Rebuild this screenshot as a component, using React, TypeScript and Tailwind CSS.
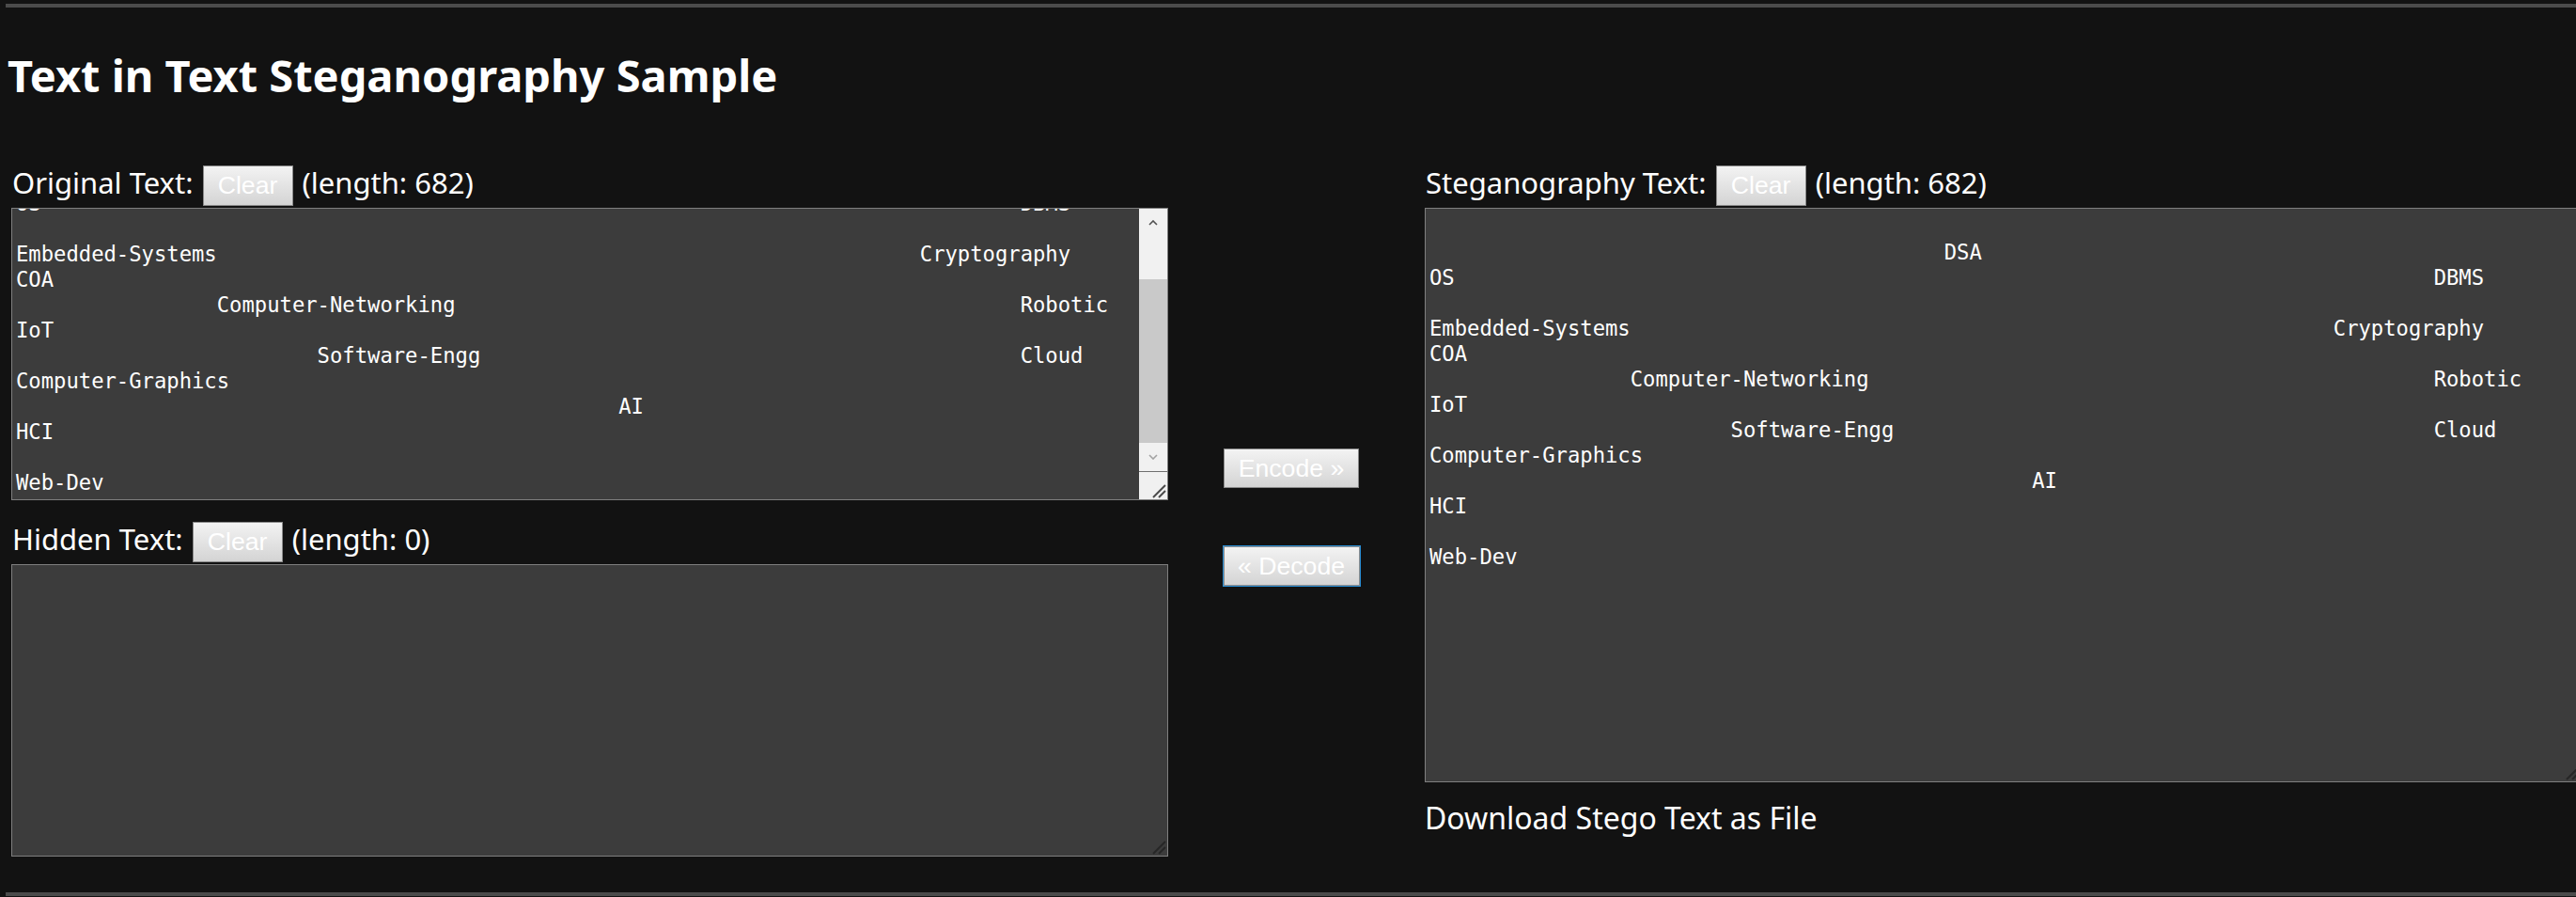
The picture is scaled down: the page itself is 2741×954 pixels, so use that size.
const ROWS: [number, string][][] = [
  [],
  [[41, "DSA"]],
  [[0, "OS"], [80, "DBMS"]],
  [],
  [[0, "Embedded-Systems"], [72, "Cryptography"]],
  [[0, "COA"]],
  [[16, "Computer-Networking"], [80, "Robotic"]],
  [[0, "IoT"]],
  [[24, "Software-Engg"], [80, "Cloud"]],
  [[0, "Computer-Graphics"]],
  [[48, "AI"]],
  [[0, "HCI"]],
  [],
  [[0, "Web-Dev"]],
]

function buildLine(parts: [number, string][]) {
  let s = ""
  for (const [col, word] of parts) s = s.padEnd(col, " ") + word
  return s
}

const btn =
  "border border-[#8a8a8a] bg-linear-to-b from-[#f3f3f3] to-[#d4d4d4] text-white font-['Liberation_Sans',Arial,sans-serif] text-[26.67px] leading-none"

// from = first row drawn; the textarea on the left is scrolled to the bottom,
// so its first two rows are out of view anyway
function StegoLines({ from = 0 }: { from?: number }) {
  return (
    <div className="whitespace-pre font-['DejaVu_Sans_Mono',monospace] text-[22.2px] leading-[27px] text-white">
      {ROWS.slice(from).map((parts, i) => (
        <div key={i} className="h-[27px]">
          {buildLine(parts) || " "}
        </div>
      ))}
    </div>
  )
}

function Grip({ color }: { color: string }) {
  return (
    <svg width="16" height="16" viewBox="0 0 16 16">
      <line x1="15" y1="2" x2="2" y2="15" stroke={color} strokeWidth="2" />
      <line x1="15" y1="8" x2="8" y2="15" stroke={color} strokeWidth="2" />
    </svg>
  )
}

function Scrollbar() {
  return (
    <div className="flex w-[30px] flex-col bg-[#f1f1f1]">
      <div className="flex h-[30px] items-center justify-center">
        <svg width="10" height="6" viewBox="0 0 10 6">
          <polyline points="1,5 5,1 9,5" fill="none" stroke="#505050" strokeWidth="1.6" />
        </svg>
      </div>
      <div className="flex flex-1 flex-col justify-end">
        <div className="h-[174px] bg-[#c9c9c9]" />
      </div>
      <div className="flex h-[30px] items-center justify-center">
        <svg width="10" height="6" viewBox="0 0 10 6">
          <polyline points="1,1 5,5 9,1" fill="none" stroke="#a3a3a3" strokeWidth="1.6" />
        </svg>
      </div>
      <div className="flex h-[30px] items-end justify-end border-t border-[#6f6f6f] bg-[#f0f0f0] p-[1px]">
        <Grip color="#4a4a4a" />
      </div>
    </div>
  )
}

function LabelRow({ label, length }: { label: string; length: number }) {
  return (
    <div className="flex items-baseline pl-[1px]">
      <span className="text-[31px] leading-none">{label}</span>
      <button className={`${btn} ml-[10px] h-[43px] w-[96px]`}>Clear</button>
      <span className="ml-[10px] text-[31px] leading-none">(length: {length})</span>
    </div>
  )
}

export default function App() {
  return (
    <div className="h-[954px] w-full overflow-hidden bg-[#121212] font-['Noto_Sans',sans-serif] text-white">
      <div className="ml-[6px] mt-[4px] h-[4px] bg-[#4b4b4b]" />
      <h1 className="ml-[8px] mt-[49px] text-[47px] font-bold leading-[47px]">
        Text in Text Steganography Sample
      </h1>

      <div className="mt-[72px] flex">
        {/* left column */}
        <div className="ml-[12px] w-[1231px] flex-none">
          <LabelRow label="Original Text:" length={682} />
          <div className="mt-[2px] flex h-[311px] border border-[#7f7f7f] bg-[#3c3c3c]">
            <div className="flex-1 overflow-hidden px-[4px] pt-[6px]">
              <div className="-mt-[25px]">
                <StegoLines from={2} />
              </div>
            </div>
            <Scrollbar />
          </div>

          <div className="mt-[23px]">
            <LabelRow label="Hidden Text:" length={0} />
          </div>
          <div className="mt-[2px] flex h-[311px] items-end justify-end border border-[#7f7f7f] bg-[#3c3c3c] p-[1px]">
            <Grip color="#262626" />
          </div>
        </div>

        {/* middle buttons */}
        <div className="flex w-[262px] flex-none flex-col items-center pt-[301px]">
          <button className={`${btn} h-[42px] w-[144px]`}>Encode »</button>
          <button
            className={`${btn} mt-[62px] h-[42px] w-[145px] outline outline-[#2a8fd6]`}
          >
            « Decode
          </button>
        </div>

        {/* right column */}
        <div className="ml-[11px] w-[1231px] flex-none">
          <LabelRow label="Steganography Text:" length={682} />
          <div className="mt-[2px] flex h-[611px] flex-col border border-[#7f7f7f] bg-[#3c3c3c]">
            <div className="flex-1 px-[4px] pt-[6px]">
              <StegoLines />
            </div>
            <div className="flex justify-end p-[1px]">
              <Grip color="#262626" />
            </div>
          </div>
          <div className="mt-[22px] text-[32px] leading-none">Download Stego Text as File</div>
        </div>
      </div>

      <div className="ml-[6px] mt-[38px] h-[4px] bg-[#4b4b4b]" />
    </div>
  )
}
